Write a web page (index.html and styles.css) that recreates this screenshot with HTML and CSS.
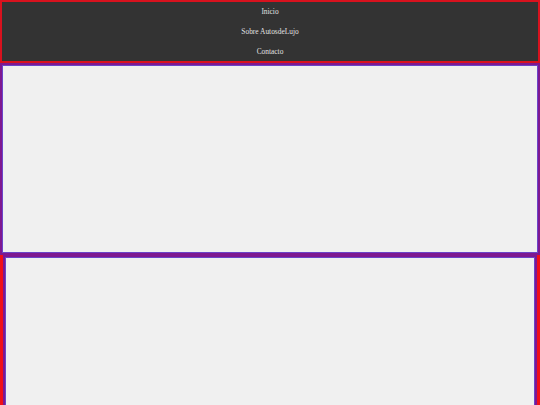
FILE: index.html
```html
<!DOCTYPE html>
<html lang="es">
<head>
<meta charset="utf-8">
<title>AutosdeLujo</title>
<link rel="stylesheet" href="styles.css">
</head>
<body>
<header class="nav">
  <a class="nav-link" href="#">Inicio</a>
  <a class="nav-link" href="#">Sobre AutosdeLujo</a>
  <a class="nav-link" href="#">Contacto</a>
</header>
<main class="main">
  <section class="hero"></section>
  <div class="wrap">
    <section class="panel"></section>
  </div>
</main>
</body>
</html>
```
FILE: styles.css
```css
html, body {
  margin: 0;
  padding: 0;
  background: #f0f0f0;
  font-family: "Liberation Serif", "Times New Roman", serif;
}
.nav {
  display: flex;
  flex-direction: column;
  align-items: center;
  background: #333333;
  border: 2px solid #d8121e;
  height: 59px;
  overflow: hidden;
}
.nav-link {
  display: block;
  color: #e4e4e4;
  text-decoration: none;
  font-size: 7.4px;
  line-height: 20px;
  opacity: 0.99;
  -webkit-font-smoothing: antialiased;
}
.main {
  display: flex;
  flex-direction: column;
}
.hero {
  height: 188px;
  border: 2px solid #7e1890;
  box-shadow: inset 0 0 0 1px #6a44c8;
  background: #f0f0f0;
}
.wrap {
  border-left: 3px solid #f01018;
  border-right: 3px solid #f01018;
  height: 160px;
}
.panel {
  height: 200px;
  border: 2px solid #7e1890;
  box-shadow: inset 0 0 0 1px #6a44c8;
  background: #f0f0f0;
}
```
